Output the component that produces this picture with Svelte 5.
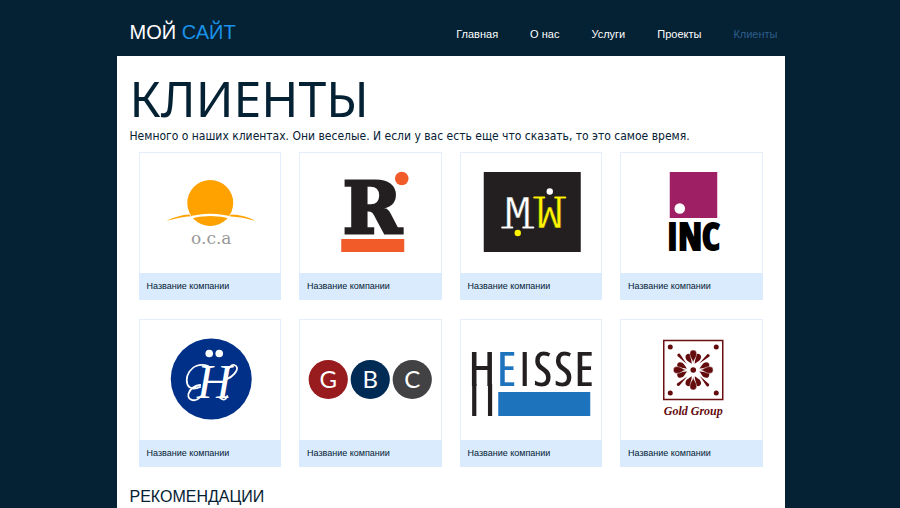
<script>
  const nav = ['Главная', 'О нас', 'Услуги', 'Проекты', 'Клиенты'];
  const active = 'Клиенты';
  const clients = ['oca', 'r', 'mw', 'inc', 'h', 'gbc', 'heisse', 'gold'];
  const discs = [
    { letter: 'G', x: 28, fill: '#981b1e' },
    { letter: 'B', x: 70, fill: '#002b55' },
    { letter: 'C', x: 112, fill: '#424244' }
  ];
  const corners = [[49, 27], [95, 27], [49, 73], [95, 73]];
</script>

<div class="page">
  <header>
    <a class="brand" href="#home">МОЙ <span>САЙТ</span></a>
    <nav>
      {#each nav as item}
        <a href="#{item}" class:active={item === active}>{item}</a>
      {/each}
    </nav>
  </header>

  <main>
    <h1>КЛИЕНТЫ</h1>
    <p class="lead">Немного о наших клиентах. Они веселые. И если у вас есть еще что сказать, то это самое время.</p>

    <section class="grid">
      {#each clients as client}
        <figure>
          <svg viewBox="0 0 140 120">
            {#if client === 'oca'}
              <circle cx="70" cy="50" r="23" fill="#ffa200" />
              <path d="M46 64.5Q70 57 94 64.5L92 66Q70 60 48 66Z" fill="#fff" />
              <path d="M26 68Q38 62 49 61.5L51 63.2Q40 64 26 68ZM116 68Q104 62 91 61.5L89 63.2Q103 64 116 68Z" fill="#ffa200" />
              <text x="71" y="91" class="oca">o.c.a</text>
            {:else if client === 'r'}
              <circle cx="101.5" cy="25.5" r="6.8" fill="#f15a29" />
              <text x="72" y="80" class="r">R</text>
              <rect x="41" y="86" width="63" height="13" fill="#f15a29" />
            {:else if client === 'mw'}
              <rect x="22.5" y="19" width="97" height="80" fill="#231f20" />
              <text x="56.5" y="75" class="mono" fill="#fff">M</text>
              <text x="-88.5" y="-44" class="mono" fill="#fff200" transform="rotate(180)">M</text>
              <path d="M41 74.5H51M62 74.5H72" stroke="#fff" stroke-width="2.2" stroke-linecap="round" />
              <path d="M73 44.5H83M94 44.5H104" stroke="#fff200" stroke-width="2.2" stroke-linecap="round" />
              <circle cx="88.5" cy="38.5" r="3.2" fill="#fff" />
              <circle cx="56.5" cy="80" r="3.2" fill="#fff200" />
            {:else if client === 'inc'}
              <rect x="48.5" y="19" width="47.5" height="46" fill="#9e1f63" />
              <circle cx="58.5" cy="55.5" r="5.3" fill="#fff" />
              <text x="72" y="97" class="inc">INC</text>
            {:else if client === 'h'}
              <circle cx="71" cy="59" r="40.5" fill="#003087" />
              <circle cx="69" cy="33.5" r="3.8" fill="#fff" />
              <circle cx="79" cy="33.5" r="3.8" fill="#fff" />
              <text x="74" y="78" class="script">H</text>
              <path d="M68 46C50 40 42 60 49 67Q53 70 60 67M61 76C54 84 45 79 49 72Q52 66 60 65M84 60C94 57 101 47 94 45Q90 44 86 53M80 78Q85 82 87 76" fill="none" stroke="#fff" stroke-width="1.8" stroke-linecap="round" />
            {:else if client === 'gbc'}
              {#each discs as disc}
                <circle cx={disc.x} cy="59.5" r="19.6" fill={disc.fill} />
                <text x={disc.x} y="68" class="disc">{disc.letter}</text>
              {/each}
            {:else if client === 'heisse'}
              <text x="70" y="67" class="heisse">H<tspan fill="#1e73bd">E</tspan>ISSE</text>
              <path d="M13 64V96M28.8 64V96" stroke="#231f20" stroke-width="4.2" />
              <rect x="37" y="72" width="92" height="24" fill="#1e73bd" />
            {:else}
              <rect x="42.5" y="20.5" width="59" height="59" fill="none" stroke="#6b0f12" stroke-width="1.5" />
              <g fill="#640b0e">
                {#each corners as [x, y]}
                  <circle cx={x} cy={y} r="2.5" />
                {/each}
                <circle cx="72" cy="50" r="2.8" />
                {#each [0, 90, 180, 270] as angle}
                  <g transform="rotate({angle} 72 50)">
                    <path d="M70.5 44C69 42 64.8 41 64.4 38A3 3 0 0 1 69 34.5C69.4 39 70.5 40 70.5 44ZM73.5 44C75 42 79.2 41 79.6 38A3 3 0 0 0 75 34.5C74.6 39 73.5 40 73.5 44Z" />
                    <path d="M72 43C71.5 39 68.6 38 68.6 33.5A3.4 3.4 0 0 1 75.4 33.5C75.4 38 72.5 39 72 43Z" stroke="#fff" stroke-width="0.4" />
                    <path d="M78 43.5L86 34.3A1.6 1.6 0 0 1 88.2 36.5Z" />
                  </g>
                {/each}
              </g>
              <text x="72" y="95" class="gold">Gold Group</text>
            {/if}
          </svg>
          <figcaption>Название компании</figcaption>
        </figure>
      {/each}
    </section>

    <h2>РЕКОМЕНДАЦИИ</h2>
  </main>
</div>

<style>
  :global(body) { margin: 0; background: #052134; }
  .page {
    max-width: 668px;
    margin: 0 auto;
    padding-left: 1px;
    font-family: "Liberation Sans", Arial, sans-serif;
    color: #052134;
  }
  header {
    display: flex;
    justify-content: space-between;
    align-items: center;
    height: 56px;
    padding: 0 7px 0 13px;
    box-sizing: border-box;
  }
  a { text-decoration: none; color: #fff; }
  .brand { font-size: 20px; line-height: 24px; padding-top: 8px; }
  .brand span { color: #1b92e8; }
  nav { display: flex; gap: 32px; font-size: 11px; line-height: 16px; padding-top: 12px; }
  nav .active { color: #2d5f8b; }
  main { background: #fff; padding: 16px 22px 0; min-height: calc(100vh - 56px); box-sizing: border-box; }
  h1, h2, .lead { margin: 0 -9px; }
  h1 { font: 400 50px/52px "Noto Sans", Tahoma, sans-serif; padding-bottom: 4px; }
  .lead { font: 400 12px/16px "DejaVu Sans Condensed", Tahoma, sans-serif; }
  .grid {
    display: grid;
    grid-template-columns: repeat(4, 1fr);
    gap: 19px 18px;
    margin-top: 8px;
  }
  figure { margin: 0; border: 1px solid #e4effb; border-bottom: 0; }
  svg { display: block; width: 100%; height: 120px; }
  figcaption {
    margin: 0 -1px;
    padding: 0 8px;
    background: #d9ebfd;
    font-size: 9px;
    line-height: 27px;
  }
  h2 { font-size: 16px; line-height: 20px; font-weight: 400; padding-top: 20px; }
  text { text-anchor: middle; }
  .oca { font: 17px "DejaVu Serif", serif; fill: #999; }
  .r { font: bold 71px "DejaVu Serif", serif; fill: #231f20; stroke: #231f20; stroke-width: 3px; }
  .mono { font: 46px "Liberation Mono", monospace; stroke: #231f20; stroke-width: 0.4px; }
  .inc { font: bold 38px "Open Sans Condensed", "Liberation Sans Narrow", sans-serif; fill: #000; stroke: #000; stroke-width: 2px; }
  .script { font: italic 48px "Liberation Serif", serif; fill: #fff; }
  .disc { font: 400 24px Lato, sans-serif; fill: #fff; }
  .heisse { font: bold 50px "Open Sans Condensed", "Liberation Sans Narrow", sans-serif; fill: #231f20; stroke: #fff; stroke-width: 2px; }
  .gold { font: italic bold 12px "Liberation Serif", serif; fill: #640b0e; }
</style>
